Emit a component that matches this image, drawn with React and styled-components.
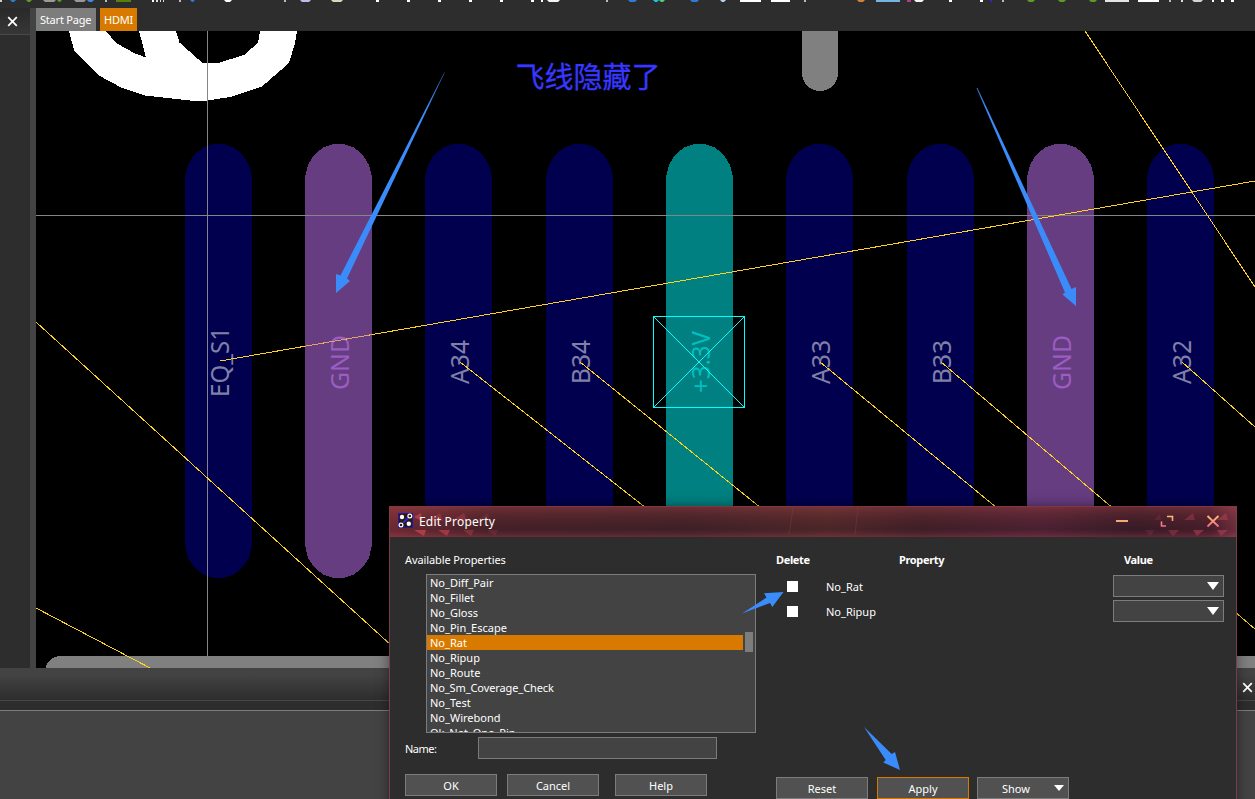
import React from "react";
import styled, { createGlobalStyle } from "styled-components";

const GlobalStyle = createGlobalStyle`
  * { box-sizing: border-box; }
  body { margin: 0; background: #2d2d2d; overflow: hidden; }
`;

const Screen = styled.div`
  position: relative;
  width: 1255px;
  height: 799px;
  overflow: hidden;
  display: flex;
  flex-direction: column;
  background: #2d2d2d;
  color: #fff;
  font: 11px/15px "Noto Sans", "Open Sans", sans-serif;
`;
const ToolStrip = styled.svg`
  display: block;
  flex: 0 0 8px;
  width: 1255px;
  height: 8px;
`;
const Workspace = styled.div`
  display: flex;
  flex: 0 0 660px;
`;
const SidePanel = styled.aside`
  width: 36px;
  border-right: 6px solid #434343;
  background: #2d2d2d;
`;
const SideHeader = styled.div`
  height: 27px;
  display: flex;
  align-items: center;
  padding-left: 7px;
  border-bottom: 1px solid #484848;
  background: linear-gradient(#292929, #363636);
`;
const Main = styled.main`
  display: flex;
  flex-direction: column;
  width: 1219px;
`;
const TabBar = styled.nav`
  display: flex;
  gap: 4px;
  height: 23px;
`;
const Tab = styled.div`
  width: ${(p) => p.$w}px;
  padding-left: ${(p) => p.$pad}px;
  line-height: 24px;
  white-space: nowrap;
  letter-spacing: ${(p) => p.$ls}px;
  background: ${(p) => (p.$active ? "#d87a00" : "#7d7d7d")};
`;
const Board = styled.svg`
  display: block;
  width: 1219px;
  height: 637px;
  background: #000;
`;
const Dock = styled.section`
  flex: 1;
  display: flex;
  flex-direction: column;
`;
const DockHeader = styled.div`
  height: 33px;
  display: flex;
  justify-content: flex-end;
  align-items: center;
  padding: 7px 2px 0 0;
  border-bottom: 1px solid #474747;
  background: linear-gradient(#434343 20%, #2d2d2d);
`;
const DockBody = styled.div`
  flex: 1;
  margin-top: 9px;
  border-top: 1px solid #7c7c7c;
  background: #434343;
`;
const Dialog = styled.section`
  position: absolute;
  left: 389px;
  top: 506px;
  width: 848px;
  height: 310px;
  border: 1px solid #7b3c4b;
  border-top: 0;
  background: #2d2d2d;
  box-shadow: 0 0 12px rgba(0, 0, 0, 0.45);
`;
const TitleBar = styled.header`
  position: relative;
  display: flex;
  align-items: center;
  justify-content: space-between;
  height: 31px;
  padding: 0 16px 1px 8px;
  border-bottom: 1px solid #803640;
  font-size: 12px;
`;
const TitleArt = styled.svg`
  position: absolute;
  inset: 0;
`;
const TitleName = styled.div`
  position: relative;
  display: flex;
  align-items: center;
  gap: 6px;
  letter-spacing: ${(p) => p.$ls}px;
`;
const TitleText = styled.span`
  padding-top: 2px;
`;
const WindowControls = styled.svg`
  position: relative;
  display: block;
`;
const DialogBody = styled.div`
  display: flex;
  padding: 15px 12px 0 15px;
`;
const LeftColumn = styled.div`
  width: 371px;
`;
const RightColumn = styled.div`
  flex: 1;
`;
const Caption = styled.div`
  height: 22px;
  letter-spacing: ${(p) => p.$ls || 0}px;
`;
const PropertyList = styled.ul`
  position: relative;
  list-style: none;
  margin: 0 0 4px 21px;
  padding: 0;
  width: 330px;
  height: 159px;
  overflow: hidden;
  border: 1px solid #7c7c7c;
  background: #434343;
`;
const PropertyItem = styled.li`
  width: 316px;
  height: 15px;
  padding-left: 3px;
  line-height: 16px;
  white-space: nowrap;
  letter-spacing: ${(p) => p.$ls || 0}px;
  background: ${(p) => (p.$selected ? "#d87a00" : "transparent")};
`;
const ScrollThumb = styled.div`
  position: absolute;
  right: 2px;
  top: 57px;
  width: 8px;
  height: 20px;
  background: #7d7d7d;
`;
const NameRow = styled.label`
  display: flex;
  align-items: center;
  height: 22px;
`;
const NameLabel = styled.span`
  width: 73px;
  padding-top: 1px;
  letter-spacing: -0.5px;
`;
const NameField = styled.div`
  width: 239px;
  height: 22px;
  border: 1px solid #7c7c7c;
  background: #434343;
`;
const ButtonRow = styled.div`
  display: flex;
  margin-top: ${(p) => p.$top}px;
`;
const Button = styled.button`
  position: relative;
  width: 92px;
  height: 22px;
  margin: 0 ${(p) => p.$after || 0}px 0 0;
  padding: ${(p) => (p.$menu ? "1px 14px 0 0" : "1px 0 0")};
  display: flex;
  align-items: center;
  justify-content: center;
  border: 1px solid ${(p) => (p.$focus ? "#d87a00" : "#7c7c7c")};
  background: #515151;
  color: #fff;
  font: inherit;
`;
const ButtonCaret = styled.svg`
  position: absolute;
  right: 4px;
  top: 7px;
`;
const HeadRow = styled.div`
  display: grid;
  height: 23px;
  font-weight: 700;
  letter-spacing: -0.35px;
  grid-template-columns: 123px 225px 100px;
`;
const ValueRow = styled.div`
  display: grid;
  height: 25px;
  grid-template-columns: 50px 287px 111px;
`;
const Check = styled.span`
  width: 11px;
  height: 11px;
  margin: 6px 0 0 11px;
  background: #fff;
`;
const PropName = styled.span`
  line-height: 24px;
`;
const Select = styled.div`
  display: flex;
  align-items: center;
  justify-content: flex-end;
  height: 22px;
  padding-right: 4px;
  border: 1px solid #7c7c7c;
  background: #434343;
`;
const Annotations = styled.svg`
  position: absolute;
  inset: 0;
  pointer-events: none;
`;

const properties = [
  "No_Diff_Pair", "No_Fillet", "No_Gloss", "No_Pin_Escape", "No_Rat", "No_Ripup",
  "No_Route", "No_Sm_Coverage_Check", "No_Test", "No_Wirebond", "Ok_Net_One_Pin",
];

const pads = [
  { x: 185, net: "EQ_S1", len: 70, end: 397 },
  { x: 305, net: "GND", len: 55, end: 390, kind: "gnd" },
  { x: 425, net: "A34", len: 44, end: 384 },
  { x: 546, net: "B34", len: 44, end: 384 },
  { x: 666, net: "+3.3V", len: 62, end: 393, kind: "power" },
  { x: 786, net: "A33", len: 44, end: 384 },
  { x: 907, net: "B33", len: 44, end: 384 },
  { x: 1027, net: "GND", len: 55, end: 390, kind: "gnd" },
  { x: 1147, net: "A32", len: 44, end: 384 },
];
const padFill = { gnd: "#663d80", power: "#008080", signal: "#00004f" };
const padText = { gnd: "#9b5cc3", power: "#00bfbf", signal: "#8080a7" };

const ratLines = [
  [1085, 31, 1255, 287], [220, 361, 1255, 181], [460, 362, 646, 508], [580, 362, 761, 508],
  [820, 362, 997, 508], [941, 362, 1255, 629], [1182, 362, 1255, 427], [36, 322, 392, 646],
  [36, 608, 152, 669],
];

const toolMarks = [
  [0, 2, "#ccc"], [10, 6, "#2d7bd6"], [26, 6, "#5c9c20"], [43, 13, "#999"], [57, 5, "#5c9c20"],
  [74, 12, "#999"], [87, 7, "#3b8be0"], [105, 2, "#bbb"], [116, 15, "#568207"], [152, 2, "#fff"],
  [156, 2, "#ddd"], [160, 1, "#ddd"], [163, 1, "#ddd"], [179, 2, "#bbb"], [190, 5, "#2d7bd6"],
  [224, 8, "#fff"], [284, 2, "#bbb"], [300, 11, "#bdbdeb"], [331, 12, "#d0dcb8"], [376, 3, "#fff"],
  [407, 3, "#fff"], [438, 3, "#fff"], [469, 3, "#fff"], [500, 3, "#fff"], [531, 3, "#fff"],
  [541, 2, "#fff"], [547, 13, "#f4f4f4"], [606, 2, "#bbb"], [628, 9, "#2d7bd6"],
  [653, 6, "#12c6f2"], [659, 6, "#55c97d"], [690, 9, "#2d7bd6"], [720, 6, "#bcd0e8"],
  [740, 21, "#fff"], [771, 19, "#fff"], [804, 2, "#bbb"], [857, 8, "#d0823a"],
  [876, 24, "#78b4e2"], [907, 4, "#b04080"], [914, 10, "#f4f4f4"], [949, 3, "#fff"],
  [980, 3, "#fff"], [990, 2, "#3422d0"], [1002, 2, "#bbb"], [1027, 8, "#5c9c20"],
  [1058, 8, "#5c9c20"], [1089, 8, "#5c9c20"], [1105, 24, "#e4e4e4"], [1138, 21, "#fff"],
  [1169, 2, "#bbb"], [1181, 2, "#ddd"], [1192, 11, "#d4d4d4"], [1212, 2, "#fff"],
  [1221, 3, "#fff"], [1231, 3, "#fff"],
];

const CloseGlyph = () => (
  <svg width="11" height="11" viewBox="0 0 11 11">
    <path d="M1.2 1.2 9.8 9.8M9.8 1.2 1.2 9.8" stroke="#fff" strokeWidth="1.7" />
  </svg>
);

const padPath = (x) =>
  `M${x} 177 L${x + 3} 165 L${x + 9} 155 L${x + 18} 147.5 L${x + 28} 144 H${x + 39} L${x + 49} 147.5 L${x + 58} 155 L${x + 64} 165 L${x + 67} 177 V545 L${x + 64} 558 L${x + 58} 567 L${x + 49} 574.5 L${x + 39} 578 H${x + 28} L${x + 18} 574.5 L${x + 9} 567 L${x + 3} 558 L${x} 545Z`;

function BoardView() {
  return (
    <Board viewBox="36 31 1219 637">
      <path
        fill="#fff" fillRule="evenodd" shapeRendering="crispEdges"
        d="M69 31 L74 50 L98 75 L122 88 L145 95.5 L190 100.5 H207 L230 97 L262 86.5 L289 63 L295 43 L297 31Z M106 31 L116 43 L135 53.5 L146 57.5 L139 31Z M176 31 L179.500 42.500 L203 63.500 L220 62.500 L245 54.500 L258 42.500 L260 31Z"
      />
      <rect x="802" y="0" width="36" height="91" rx="18" fill="#808080" shapeRendering="crispEdges" />
      <rect x="45" y="656" width="1240" height="60" rx="16" fill="#808080" shapeRendering="crispEdges" />
      {pads.map((p) => (
        <path key={p.x} d={padPath(p.x)} fill={padFill[p.kind || "signal"]} shapeRendering="crispEdges" />
      ))}
      {pads.map((p) => (
        <text
          key={p.x} transform={`translate(${p.x + 43.5} ${p.end}) rotate(-90)`} textLength={p.len}
          lengthAdjust="spacingAndGlyphs" fontFamily="'Noto Sans', sans-serif" fontSize="25.5"
          fill={padText[p.kind || "signal"]}
        >
          {p.net}
        </text>
      ))}
      <g stroke="#858585" shapeRendering="crispEdges">
        <path d="M207.500 31V656M36 215.500H1255" />
      </g>
      <g stroke="#ffd21e" shapeRendering="crispEdges">
        {ratLines.map(([x1, y1, x2, y2]) => (
          <line key={`${x1}-${y1}`} x1={x1} y1={y1} x2={x2} y2={y2} />
        ))}
      </g>
      <path d="M305 346.220 372 334.560" stroke="#e0a070" shapeRendering="crispEdges" />
      <path d="M653.500 316.500H744.500V407.500H653.500ZL744.500 407.500M744.500 316.500 653.500 407.500" fill="none" stroke="#00ffff" shapeRendering="crispEdges" />
      <text x="515.500" y="87.500" fontSize="29" textLength="145" fontFamily="'Noto Sans CJK SC', sans-serif" fill="#3737ff" stroke="#3737ff" strokeWidth="0.3">飞线隐藏了</text>
    </Board>
  );
}

function TitleBackground() {
  return (
    <TitleArt width="846" height="31" viewBox="390 506 846 31">
      <defs>
        <linearGradient id="bar">
          <stop offset="0" stopColor="#7c2e39" />
          <stop offset="0.12" stopColor="#4b222b" />
          <stop offset="0.35" stopColor="#44222a" />
          <stop offset="0.52" stopColor="#542a2c" />
          <stop offset="0.63" stopColor="#45202a" />
          <stop offset="0.77" stopColor="#542338" />
          <stop offset="0.88" stopColor="#3b1c29" />
          <stop offset="0.97" stopColor="#4c1e2e" />
          <stop offset="1" stopColor="#7b3445" />
        </linearGradient>
        <linearGradient id="shade" x2="0" y2="1">
          <stop offset="0" stopColor="#b04545" stopOpacity="0.4" />
          <stop offset="0.35" stopColor="#6a2d2d" stopOpacity="0.25" />
          <stop offset="0.75" stopColor="#241418" stopOpacity="0.2" />
          <stop offset="1" stopColor="#a04050" stopOpacity="0.35" />
        </linearGradient>
      </defs>
      <rect x="390" y="506" width="846" height="31" fill="url(#bar)" />
      <rect x="390" y="506" width="846" height="31" fill="url(#shade)" />
      <path d="M390 506.500H1236" stroke="#803640" />
      <path d="M793 508 789 535M858 508 855 535" stroke="#98505a" opacity="0.25" />
      <g fill="#c2414a">
        <path d="M414 530H426L424 536Z" opacity=".8" />
        <path d="M438 530H450L447 536Z" opacity=".65" />
        <path d="M463 530H474L471 536Z" opacity=".4" />
        <path d="M487 530H498L495 536Z" opacity=".2" />
        <path d="M414 517 421 513 422 521Z" opacity=".8" />
        <path d="M428 520 440 513 443 521ZM452 520 464 513 467 521Z" opacity=".4" />
        <path d="M476 520 488 513 490 521Z" opacity=".18" />
      </g>
      <g fill="#b24058">
        <path d="M1145 530H1155L1150 536ZM1154 520 1160 514 1161 520Z" opacity=".2" />
        <path d="M1168 530H1179L1173 536ZM1184 520 1193 513 1195 520Z" opacity=".4" />
        <path d="M1193 530H1204L1197 536ZM1217 530H1228L1221 536ZM1217 520 1226 513 1228 520Z" opacity=".55" />
      </g>
    </TitleArt>
  );
}

const Logo = () => (
  <svg width="15" height="15" viewBox="0 0 15 15">
    <rect x="0.5" y="0.5" width="14" height="14" fill="#261c12" stroke="#2413b4" />
    <path d="M5 10 10.500 4.500" stroke="#3422e0" strokeWidth="2" />
    <circle cx="4" cy="4" r="2.200" fill="#fff" />
    <circle cx="10.800" cy="10.800" r="2.200" fill="#fff" />
    <circle cx="11.800" cy="3" r="1.900" fill="none" stroke="#fff" strokeWidth="1.200" />
    <circle cx="3" cy="12" r="1.900" fill="none" stroke="#fff" strokeWidth="1.200" />
  </svg>
);

function EditPropertyDialog() {
  return (
    <Dialog>
      <TitleBar>
        <TitleBackground />
        <TitleName $ls={0.2}>
          <Logo />
          <TitleText>Edit Property</TitleText>
        </TitleName>
        <WindowControls width="104" height="14" viewBox="0 0 104 14">
          <defs>
            <linearGradient id="ctl" x2="0" y2="14" gradientUnits="userSpaceOnUse">
              <stop offset="0.1" stopColor="#ffc56c" />
              <stop offset="0.9" stopColor="#f06c86" />
            </linearGradient>
          </defs>
          <rect x="0" y="6" width="12" height="2" fill="#f6a77b" />
          <path d="M51 2.500H56.500V7M45.500 7.500V12H50" fill="none" stroke="url(#ctl)" strokeWidth="1.600" />
          <path d="M91.500 2 102.500 12.500M102.500 2 91.500 12.500" stroke="url(#ctl)" strokeWidth="1.800" />
        </WindowControls>
      </TitleBar>
      <DialogBody>
        <LeftColumn>
          <Caption $ls={-0.1}>Available Properties</Caption>
          <PropertyList>
            {properties.map((name) => (
              <PropertyItem key={name} $selected={name === "No_Rat"} $ls={name.length > 15 ? -0.1 : 0}>{name}</PropertyItem>
            ))}
            <ScrollThumb />
          </PropertyList>
          <NameRow>
            <NameLabel>Name:</NameLabel>
            <NameField />
          </NameRow>
          <ButtonRow $top={15}>
            <Button $after={10}>OK</Button>
            <Button $after={16}>Cancel</Button>
            <Button>Help</Button>
          </ButtonRow>
        </LeftColumn>
        <RightColumn>
          <HeadRow>
            <span>Delete</span>
            <span>Property</span>
            <span>Value</span>
          </HeadRow>
          {["No_Rat", "No_Ripup"].map((name) => (
            <ValueRow key={name}>
              <Check />
              <PropName>{name}</PropName>
              <Select>
                <svg width="12" height="8"><path d="M0 0H12L6 8Z" fill="#fff" /></svg>
              </Select>
            </ValueRow>
          ))}
          <ButtonRow $top={152}>
            <Button $after={9}>Reset</Button>
            <Button $after={8} $focus>Apply</Button>
            <Button $menu>
              Show
              <ButtonCaret width="10" height="6"><path d="M0 0H10L5 6Z" fill="#fff" /></ButtonCaret>
            </Button>
          </ButtonRow>
        </RightColumn>
      </DialogBody>
    </Dialog>
  );
}

export default function App() {
  return (
    <Screen>
      <GlobalStyle />
      <ToolStrip viewBox="0 0 1255 8">
        {toolMarks.map(([x, w, fill]) => (
          <path key={x} d={w > 4 && w < 14 ? `M${x} 0H${x + w}L${x + w - 2} 2H${x + 2}Z` : `M${x} 0H${x + w}V2H${x}Z`} fill={fill} />
        ))}
      </ToolStrip>
      <Workspace>
        <SidePanel>
          <SideHeader><CloseGlyph /></SideHeader>
        </SidePanel>
        <Main>
          <TabBar>
            <Tab $w={60} $pad={4} $ls={-0.2}>Start Page</Tab>
            <Tab $w={37} $pad={4} $ls={-0.2} $active>HDMI</Tab>
          </TabBar>
          <BoardView />
        </Main>
      </Workspace>
      <Dock>
        <DockHeader><CloseGlyph /></DockHeader>
        <DockBody />
      </Dock>
      <EditPropertyDialog />
      <Annotations width="1255" height="799">
        <defs>
          <linearGradient id="tail" x1="0" y1="73" x2="0" y2="110" gradientUnits="userSpaceOnUse">
            <stop offset="0" stopColor="#3b8cfb" stopOpacity="0.7" />
            <stop offset="1" stopColor="#3b8cfb" />
          </linearGradient>
        </defs>
        <g fill="#3b8cfb">
          <path d="M445 72 444 73 340.500 275.500 336 274V293L350 281 347 278.500Z" fill="url(#tail)" />
          <path d="M976.500 88 1065 292.500 1062.500 294.500 1076 306V287L1071.500 289 977.500 88Z" fill="url(#tail)" />
          <path d="M742 613.500 766.500 597.500 764 593.300 783.500 592 772.300 607 770 603Z" />
          <path d="M864 727 885.700 760 883.300 762.500 900 770 895 752 891.700 754Z" />
        </g>
      </Annotations>
    </Screen>
  );
}
